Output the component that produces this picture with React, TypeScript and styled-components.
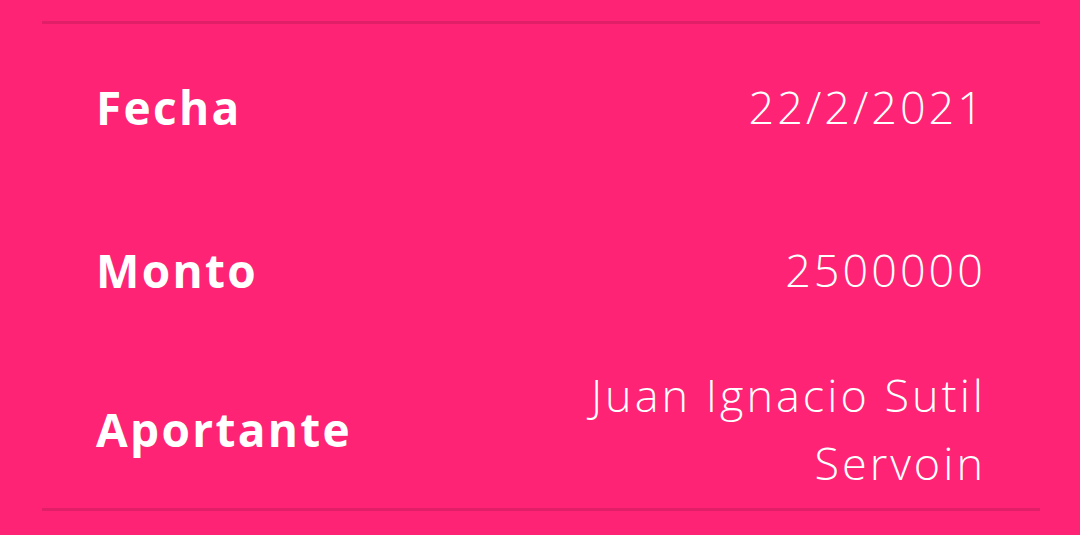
import styled, { createGlobalStyle } from 'styled-components';

const GlobalStyle = createGlobalStyle`
  html, body {
    margin: 0;
    padding: 0;
    background: #fe2374;
  }
  body {
    font-family: 'Open Sans', 'Lato', sans-serif;
    color: #ffffff;
  }
`;

const Page = styled.div`
  width: 1080px;
  height: 535px;
  box-sizing: border-box;
  padding: 21px 40px 0 42px;
  background: #fe2374;
`;

const DetailList = styled.div`
  border-top: 3px solid #e01f68;
  border-bottom: 3px solid #e01f68;
  display: flex;
  flex-direction: column;
`;

const DetailRow = styled.div<{ $height: number }>`
  height: ${props => props.$height}px;
  display: grid;
  grid-template-columns: auto 1fr;
  align-items: center;
  padding: 0 54px 0 54px;
`;

const Label = styled.div`
  font-weight: 700;
  font-size: 46px;
  letter-spacing: 2.3px;
`;

const Value = styled.div`
  font-weight: 300;
  font-size: 45px;
  line-height: 68px;
  text-align: right;
  letter-spacing: 3px;
  padding-left: 130px;
`;

const rows = [
  { label: 'Fecha', value: '22/2/2021', height: 166 },
  { label: 'Monto', value: '2500000', height: 160 },
  { label: 'Aportante', value: 'Juan Ignacio Sutil Servoin', height: 158 },
];

export default function App() {
  return (
    <>
      <GlobalStyle />
      <Page>
        <DetailList>
          {rows.map(row => (
            <DetailRow key={row.label} $height={row.height}>
              <Label>{row.label}</Label>
              <Value>{row.value}</Value>
            </DetailRow>
          ))}
        </DetailList>
      </Page>
    </>
  );
}
